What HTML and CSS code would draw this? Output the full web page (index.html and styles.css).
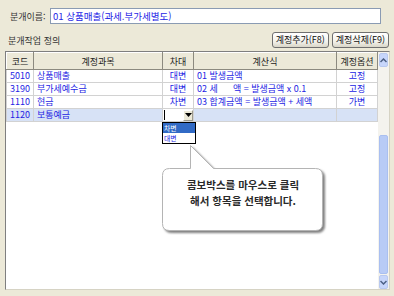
FILE: index.html
```html
<!DOCTYPE html>
<html lang="ko">

<head>
  <meta charset="UTF-8">
  <title>분개작업 정의</title>
  <link rel="stylesheet" href="styles.css">
</head>

<body>

  <div class="nameRow">
    <label for="jName">분개이름:</label>
    <div class="nameBox" id="jName">01 상품매출(과세.부가세별도)</div>
  </div>

  <div class="defRow">
    <span class="defTitle">분개작업 정의</span>
    <div class="btns">
      <button class="xpBtn">계정추가(F8)</button>
      <button class="xpBtn">계정삭제(F9)</button>
    </div>
  </div>

  <div class="gridBox">
    <div class="gridBody">
      <table class="grid">
        <colgroup>
          <col class="cCode">
          <col class="cName">
          <col class="cSide">
          <col class="cCalc">
          <col class="cOpt">
        </colgroup>
        <thead>
          <tr>
            <th>코드</th>
            <th>계정과목</th>
            <th>차대</th>
            <th>계산식</th>
            <th>계정옵션</th>
          </tr>
        </thead>
        <tbody>
          <tr>
            <td class="mid">5010</td>
            <td>상품매출</td>
            <td class="mid">대변</td>
            <td>01 발생금액</td>
            <td class="mid">고정</td>
          </tr>
          <tr>
            <td class="mid">3190</td>
            <td>부가세예수금</td>
            <td class="mid">대변</td>
            <td>02 세&nbsp;&nbsp;&nbsp;&nbsp;&nbsp;&nbsp;액 = 발생금액 x 0.1</td>
            <td class="mid">고정</td>
          </tr>
          <tr>
            <td class="mid">1110</td>
            <td>현금</td>
            <td class="mid">차변</td>
            <td>03 합계금액 = 발생금액 + 세액</td>
            <td class="mid">가변</td>
          </tr>
          <tr class="curRow">
            <td class="mid">1120</td>
            <td>보통예금</td>
            <td class="comboCell">
              <div class="combo">
                <span class="caret"></span>
                <span class="comboBtn"><svg width="7" height="4" viewBox="0 0 7 4"><path d="M0 0H7L3.5 4Z" fill="#000"/></svg></span>
              </div>
            </td>
            <td></td>
            <td></td>
          </tr>
        </tbody>
      </table>

      <!-- dropdown list of the combo -->
      <ul class="dropList">
        <li class="sel">차변</li>
        <li>대변</li>
      </ul>

      <!-- help balloon -->
      <div class="balloon">
        <svg class="balloonShape" width="164" height="90" viewBox="0 0 164 90">
          <path d="M7.5,23.5 H28.5 L28.5,0.5 L51.5,23.5 H153.5 Q160.5,23.5 160.5,30.5 V78.5 Q160.5,85.5 153.5,85.5 H7.5 Q0.5,85.5 0.5,78.5 V30.5 Q0.5,23.5 7.5,23.5 Z" fill="#fff" stroke="#b4b4b4"/>
        </svg>
        <div class="balloonText">콤보박스를 마우스로 클릭<br>해서 항목을 선택합니다.</div>
      </div>
    </div>

    <div class="vScroll">
      <div class="sBtn"><svg width="7" height="5" viewBox="0 0 7 5"><path d="M0.5 4L3.5 1L6.5 4" fill="none" stroke="#4d6185" stroke-width="1.5"/></svg></div>
      <div class="sTrack"></div>
      <div class="sThumb"></div>
      <div class="sBtn"><svg width="7" height="5" viewBox="0 0 7 5"><path d="M0.5 1L3.5 4L6.5 1" fill="none" stroke="#4d6185" stroke-width="1.5"/></svg></div>
    </div>
  </div>

</body>

</html>
```

FILE: styles.css
```css
body {
  margin: 0;
  width: 394px;
  height: 296px;
  background-color: #ece9d8;
  font-family: "Noto Sans CJK KR", "Noto Sans", sans-serif;
  font-size: 9px;
  color: #222;
  overflow: hidden;
}

.nameRow {
  display: flex;
  align-items: center;
  padding: 8px 0 0 10px;
  height: 16px;
}

.nameRow label {
  width: 40px;
  color: #333;
}

.nameBox {
  width: 327px;
  height: 14px;
  line-height: 14px;
  border: 1px solid #8a9bb3;
  background: #fff;
  color: #2424e6;
  padding-left: 2px;
  font-size: 9.5px;
}

.defRow {
  display: flex;
  justify-content: space-between;
  align-items: center;
  padding: 8px 5px 0 8px;
  height: 16px;
}

.defTitle {
  color: #333;
  padding-top: 1px;
}

.btns {
  display: flex;
  gap: 3px;
}

.xpBtn {
  font-family: inherit;
  font-size: 9px;
  color: #111;
  height: 16px;
  padding: 0 3px;
  line-height: 14px;
  border: 1px solid #6f6f6f;
  border-radius: 3px;
  background: linear-gradient(#ffffff, #f3f2ec 60%, #d9d6c8);
}

.gridBox {
  display: flex;
  margin: 3px 4px 0 5px;
  height: 237px;
  border: 1px solid #7f7f7f;
  border-right-color: #d6d3c4;
  border-bottom-color: #d6d3c4;
  background: #fff;
}

.gridBody {
  position: relative;
  flex: 1;
}

.grid {
  width: 371px;
  table-layout: fixed;
  border-collapse: collapse;
}

.cCode { width: 27px; }
.cName { width: 129px; }
.cSide { width: 31px; }
.cCalc { width: 143px; }
.cOpt { width: 41px; }

.grid th {
  height: 16px;
  padding: 0;
  font-weight: normal;
  color: #222;
  background: #ece9d8;
  border: 1px solid #8c8a7f;
  border-top-color: #fff;
  border-left-color: #fff;
  text-align: center;
}

.grid td {
  height: 12px;
  padding: 0 0 0 3px;
  line-height: 12px;
  color: #2323e3;
  border: 1px solid #d2d2d2;
  white-space: nowrap;
  overflow: hidden;
}

.grid td.mid {
  text-align: center;
  padding: 0;
}

.curRow td {
  background: #d7e2f6;
}

.grid td.comboCell {
  padding: 0;
  background: #fff;
}

.combo {
  display: flex;
  justify-content: space-between;
  align-items: center;
  height: 12px;
}

.caret {
  width: 1px;
  height: 10px;
  margin-left: 1px;
  background: #000;
}

.comboBtn {
  display: flex;
  justify-content: center;
  align-items: center;
  width: 10px;
  height: 11px;
  background: #ece9d8;
  border: 1px solid #9c9a8e;
  border-top-color: #fff;
  border-left-color: #fff;
  box-sizing: border-box;
}

.dropList {
  position: absolute;
  left: 156px;
  top: 70px;
  width: 32px;
  margin: 0;
  padding: 0;
  list-style: none;
  border: 1px solid #000;
  background: #fff;
}

.dropList li {
  height: 10px;
  line-height: 10px;
  padding-left: 1px;
  font-size: 6.8px;
  color: #2323e3;
  overflow: hidden;
}

.dropList li.sel {
  background: #316ac5;
  color: #fff;
}

.balloon {
  position: absolute;
  left: 156px;
  top: 93px;
  width: 164px;
  height: 90px;
}

.balloonShape {
  display: block;
  filter: drop-shadow(2px 2px 1px rgba(0, 0, 0, 0.5));
}

.balloonText {
  position: absolute;
  left: 0;
  top: 32px;
  width: 162px;
  text-align: center;
  font-size: 10.5px;
  font-weight: bold;
  line-height: 15.5px;
  color: #2a2a2a;
}

.vScroll {
  display: flex;
  flex-direction: column;
  width: 12px;
  background: #f4f3ee;
}

.sBtn {
  display: flex;
  justify-content: center;
  align-items: center;
  height: 14px;
  margin: 1px 1px 0 1px;
  border: 1px solid #b9c9ef;
  border-radius: 2px;
  background: #c7d6fb;
  box-sizing: border-box;
}

.sTrack {
  height: 68px;
}

.sThumb {
  flex: 1;
  margin: 0 1px;
  background: #b8cbf6;
  border: 1px solid #a9bff0;
  border-radius: 2px;
}
```
